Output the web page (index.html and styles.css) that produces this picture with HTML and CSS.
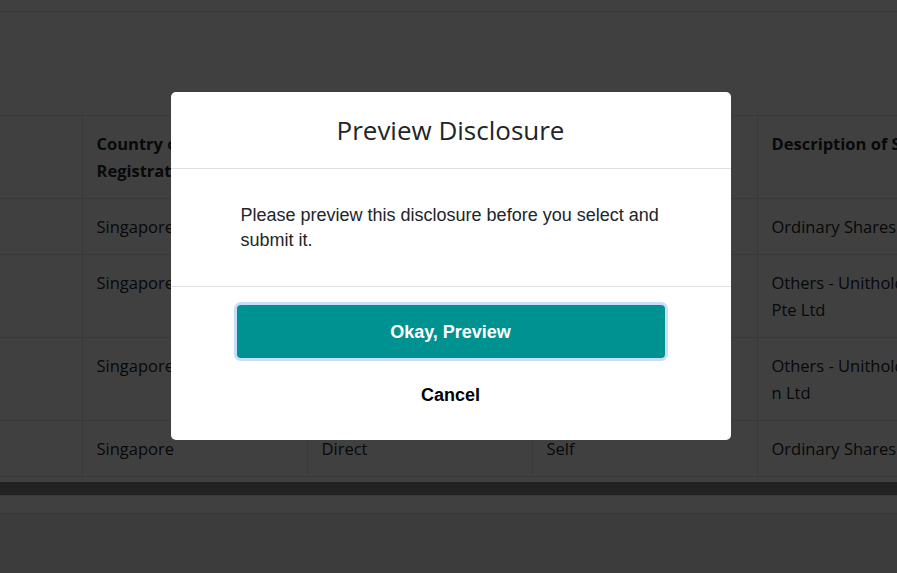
FILE: index.html
```html
<!DOCTYPE html>
<html lang="en">
<head>
    <meta charset="UTF-8">
    <meta name="viewport" content="width=device-width, initial-scale=1.0">
    <title>Disclosures</title>
    <link rel="stylesheet" href="styles.css">
</head>
<body>
    <div class="topbar"></div>

    <div class="table-wrap">
        <table class="holdings">
            <colgroup>
                <col class="col-first">
                <col class="col-mid">
                <col class="col-mid">
                <col class="col-mid">
                <col class="col-last">
            </colgroup>
            <thead>
                <tr>
                    <th></th>
                    <th>Country of<br>Registration</th>
                    <th>Nature of<br>Interest</th>
                    <th>Relationship</th>
                    <th>Description of Securities</th>
                </tr>
            </thead>
            <tbody>
                <tr>
                    <td></td>
                    <td>Singapore</td>
                    <td>Direct</td>
                    <td>Self</td>
                    <td>Ordinary Shares</td>
                </tr>
                <tr>
                    <td></td>
                    <td>Singapore</td>
                    <td>Deemed</td>
                    <td>Spouse</td>
                    <td>Others - Unithold<br>Pte Ltd</td>
                </tr>
                <tr>
                    <td></td>
                    <td>Singapore</td>
                    <td>Deemed</td>
                    <td>Self</td>
                    <td>Others - Unithold<br>n Ltd</td>
                </tr>
                <tr>
                    <td></td>
                    <td>Singapore</td>
                    <td>Direct</td>
                    <td>Self</td>
                    <td>Ordinary Shares</td>
                </tr>
            </tbody>
        </table>
        <div class="scrollbar"></div>
    </div>

    <div class="page-footer"></div>

    <div class="overlay">
        <div class="modal">
            <div class="modal-header">
                <h2>Preview Disclosure</h2>
            </div>
            <div class="modal-body">
                <p>Please preview this disclosure before you select and submit it.</p>
            </div>
            <div class="modal-footer">
                <button class="btn-preview">Okay, Preview</button>
                <button class="btn-cancel">Cancel</button>
            </div>
        </div>
    </div>
</body>
</html>
```

FILE: styles.css
```css
body {
    font-family: "Open Sans", "Noto Sans", sans-serif;
    background-color: #ffffff;
    color: #212529;
    margin: 0;
    height: 573px;
    overflow: hidden;
}
.topbar {
    height: 11px;
    background-color: #ffffff;
    border-bottom: 1px solid #e4e4e4;
}
.table-wrap {
    margin-top: 103px;
    overflow: hidden;
    border-bottom: 1px solid #e4e4e4;
}
.holdings {
    border-collapse: collapse;
    table-layout: fixed;
    width: 984px;
    font-size: 16.5px;
    line-height: 27px;
}
.col-first { width: 82px; }
.col-mid { width: 225px; }
.col-last { width: 227px; }
.holdings th, .holdings td {
    border: 1px solid #dee2e6;
    border-left: none;
    padding: 14px;
    text-align: left;
    vertical-align: top;
    white-space: nowrap;
    overflow: hidden;
}
.holdings th {
    font-weight: 700;
}
.holdings td:last-child, .holdings th:last-child {
    border-right: none;
}
.scrollbar {
    height: 13px;
    margin-top: 5px;
    background-color: #888888;
}
.page-footer {
    height: 17px;
    border-bottom: 1px solid #e0e0e0;
    background-color: #ffffff;
}
body::after {
    content: "";
    display: block;
    height: 60px;
    background-color: #f0f0f0;
}

/* dialog */
.overlay {
    position: fixed;
    top: 0;
    left: 0;
    right: 0;
    bottom: 0;
    padding-left: 4px;
    display: flex;
    justify-content: center;
    align-items: flex-start;
    background-color: rgba(0, 0, 0, 0.75);
    z-index: 10;
}
.modal {
    width: 560px;
    margin-top: 92px;
    background-color: #ffffff;
    border-radius: 5px;
}
.modal-header {
    height: 76px;
    border-bottom: 1px solid #dee2e6;
    display: flex;
    align-items: center;
    justify-content: center;
}
.modal-header h2 {
    margin: 0;
    font-size: 26px;
    font-weight: 500;
    color: #212529;
}
.modal-body {
    padding: 34px 56px 33px 70px;
    border-bottom: 1px solid #dee2e6;
}
.modal-body p {
    margin: 0;
    font-family: "Liberation Sans", Arial, sans-serif;
    font-size: 18px;
    line-height: 25px;
    color: #212529;
}
.modal-footer {
    display: flex;
    flex-direction: column;
    align-items: center;
    padding: 18px 0 24px 0;
}
.btn-preview {
    width: 428px;
    height: 53px;
    border: none;
    border-radius: 4px;
    background-color: #009191;
    color: #ffffff;
    font-family: "Liberation Sans", Arial, sans-serif;
    font-size: 18px;
    font-weight: 700;
    padding-top: 2px;
    box-shadow: 0 0 0 3px #c6defa;
    cursor: pointer;
}
.btn-cancel {
    margin-top: 14px;
    height: 44px;
    border: none;
    background: none;
    color: #000000;
    font-family: "Liberation Sans", Arial, sans-serif;
    font-size: 18px;
    font-weight: 700;
    padding-top: 3px;
    cursor: pointer;
}
```
